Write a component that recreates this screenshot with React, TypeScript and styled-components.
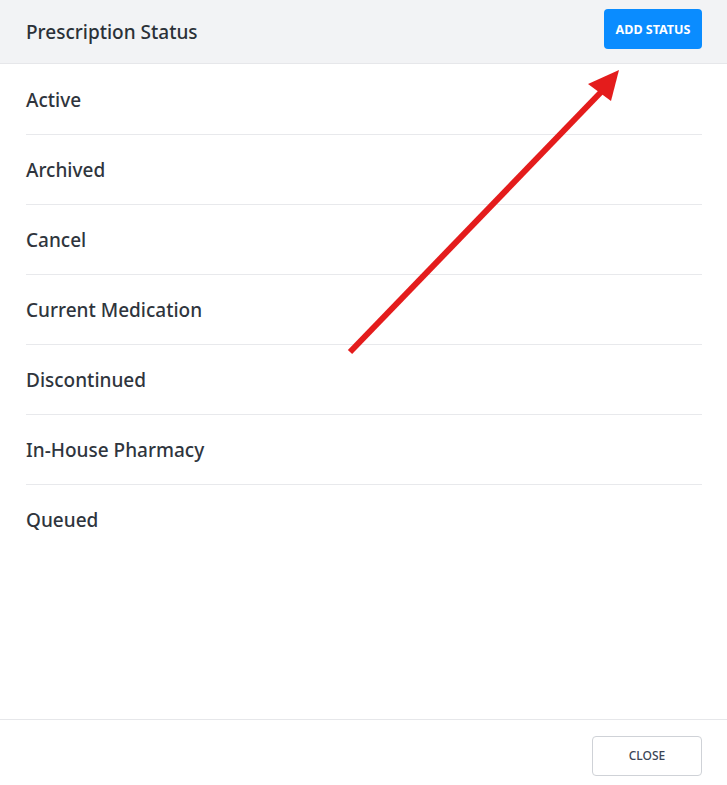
import React from 'react'
import styled, { createGlobalStyle } from 'styled-components'

const GlobalStyle = createGlobalStyle`
	html, body {
		margin: 0;
		padding: 0;
		background: #ffffff;
	}
	body {
		font-family: "Noto Sans", "Open Sans", sans-serif;
		color: #343a40;
	}
`

const Modal = styled.div`
	position: relative;
	width: 727px;
	height: 785px;
	display: flex;
	flex-direction: column;
	background: #ffffff;
	overflow: hidden;
`

const Header = styled.div`
	height: 63px;
	display: flex;
	align-items: center;
	justify-content: space-between;
	padding: 0 25px 0 26px;
	background: #f2f3f5;
	border-bottom: 1px solid #e6e7ea;
`

const Title = styled.h2`
	margin: 0;
	font-size: 19px;
	font-weight: 500;
	color: #2b3138;
`

const PrimaryButton = styled.button`
	width: 98px;
	height: 40px;
	margin-top: -5px;
	padding: 0;
	border: none;
	border-radius: 4px;
	background: #0a8cff;
	color: #ffffff;
	font-family: inherit;
	font-size: 12.5px;
	font-weight: 700;
	cursor: pointer;
`

const List = styled.ul`
	flex: 1;
	list-style: none;
	margin: 0;
	padding: 1px 25px 0 26px;
`

const Row = styled.li`
	height: 70px;
	display: flex;
	align-items: center;
	font-size: 19px;
	font-weight: 500;
	color: #2f353d;
	border-bottom: ${p => (p.$last ? 'none' : '1px solid #e8e9ec')};
	box-sizing: border-box;
`

const Footer = styled.div`
	height: 65px;
	display: flex;
	align-items: center;
	justify-content: flex-end;
	padding: 0 25px 0 26px;
	border-top: 1px solid #e6e7ea;
`

const OutlineButton = styled.button`
	width: 110px;
	height: 40px;
	margin-top: 6px;
	padding: 0;
	border: 1px solid #cfd2d7;
	border-radius: 4px;
	background: #ffffff;
	color: #3b4556;
	font-family: inherit;
	font-size: 12px;
	font-weight: 500;
	cursor: pointer;
`

const ArrowLayer = styled.svg`
	position: absolute;
	left: 0;
	top: 0;
	pointer-events: none;
`

const statuses = [
	'Active',
	'Archived',
	'Cancel',
	'Current Medication',
	'Discontinued',
	'In-House Pharmacy',
	'Queued',
]

const App: React.FC = () => {
	return (
		<>
			<GlobalStyle />
			<Modal>
				<Header>
					<Title>Prescription Status</Title>
					<PrimaryButton>ADD STATUS</PrimaryButton>
				</Header>
				<List>
					{statuses.map((s, i) => (
						<Row key={s} $last={i === statuses.length - 1}>{s}</Row>
					))}
				</List>
				<Footer>
					<OutlineButton>CLOSE</OutlineButton>
				</Footer>
				{/* annotation arrow pointing at the add button */}
				<ArrowLayer width="727" height="785" viewBox="0 0 727 785">
					<line x1="350" y1="352" x2="603" y2="90" stroke="#e41c1c" strokeWidth="6" />
					<polygon points="619,70 588,84 611,101" fill="#e41c1c" />
				</ArrowLayer>
			</Modal>
		</>
	)
}

export default App
